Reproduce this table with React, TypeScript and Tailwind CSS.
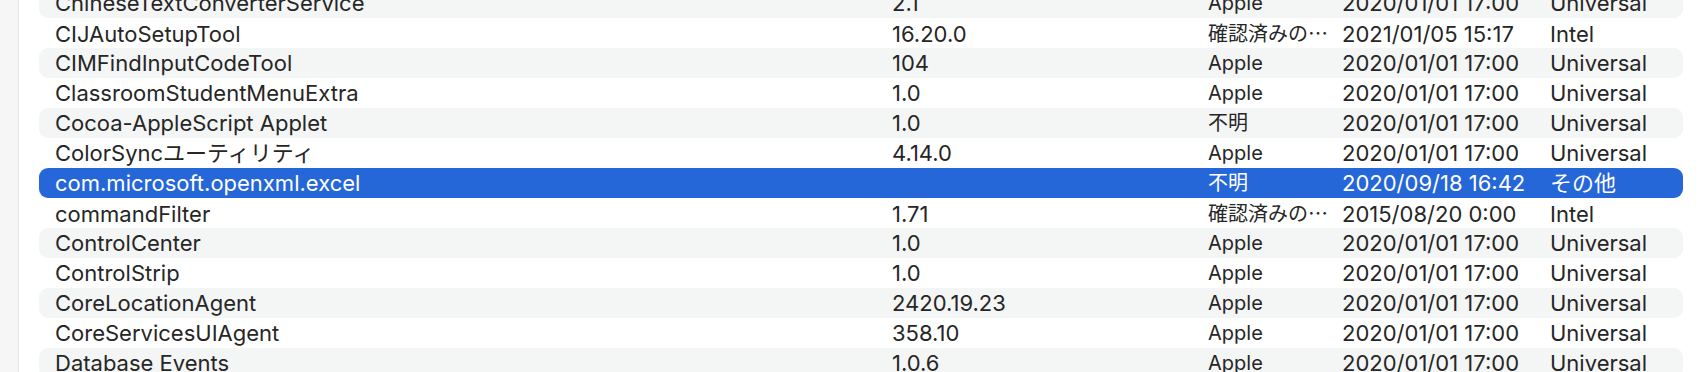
type Row = { name: string; version: string; signer: string; date: string; kind: string };

const rows: Row[] = [
  { name: "ChineseTextConverterService", version: "2.1", signer: "Apple", date: "2020/01/01 17:00", kind: "Universal" },
  { name: "CIJAutoSetupTool", version: "16.20.0", signer: "確認済みの…", date: "2021/01/05 15:17", kind: "Intel" },
  { name: "CIMFindInputCodeTool", version: "104", signer: "Apple", date: "2020/01/01 17:00", kind: "Universal" },
  { name: "ClassroomStudentMenuExtra", version: "1.0", signer: "Apple", date: "2020/01/01 17:00", kind: "Universal" },
  { name: "Cocoa-AppleScript Applet", version: "1.0", signer: "不明", date: "2020/01/01 17:00", kind: "Universal" },
  { name: "ColorSyncユーティリティ", version: "4.14.0", signer: "Apple", date: "2020/01/01 17:00", kind: "Universal" },
  { name: "com.microsoft.openxml.excel", version: "", signer: "不明", date: "2020/09/18 16:42", kind: "その他" },
  { name: "commandFilter", version: "1.71", signer: "確認済みの…", date: "2015/08/20 0:00", kind: "Intel" },
  { name: "ControlCenter", version: "1.0", signer: "Apple", date: "2020/01/01 17:00", kind: "Universal" },
  { name: "ControlStrip", version: "1.0", signer: "Apple", date: "2020/01/01 17:00", kind: "Universal" },
  { name: "CoreLocationAgent", version: "2420.19.23", signer: "Apple", date: "2020/01/01 17:00", kind: "Universal" },
  { name: "CoreServicesUIAgent", version: "358.10", signer: "Apple", date: "2020/01/01 17:00", kind: "Universal" },
  { name: "Database Events", version: "1.0.6", signer: "Apple", date: "2020/01/01 17:00", kind: "Universal" },
];

const SELECTED = 6;

export default function App() {
  return (
    <div
      className="flex h-[372px] w-[1702px] overflow-hidden bg-white text-[22px] text-[#262626]"
      style={{ fontFamily: 'Inter, "Noto Sans CJK JP", sans-serif' }}
    >
      <div className="w-[19px] shrink-0 border-r border-[#e4e4e4] bg-[#f6f6f6]" />
      <div className="-mt-[12px] flex-1 pl-[20px] pr-[19px]">
        {rows.map((r, i) => {
          const sel = i === SELECTED;
          const bg = sel ? "bg-[#2566d8] text-white" : i % 2 === 0 ? "bg-[#f4f5f5]" : "";
          return (
            <div
              key={r.name}
              className={`grid h-[30px] grid-cols-[837px_316px_134px_208px_1fr] items-center rounded-[9px] pl-[16px] leading-[30px] ${bg}`}
            >
              <span className="truncate">{r.name}</span>
              <span>{r.version}</span>
              <span className="whitespace-nowrap text-[20px]">
                {r.signer.endsWith("…") ? (
                  <>
                    {r.signer.slice(0, -1)}
                    <span className="font-['Noto_Sans_CJK_JP']">…</span>
                  </>
                ) : (
                  r.signer
                )}
              </span>
              <span className="whitespace-nowrap">{r.date}</span>
              <span>{r.kind}</span>
            </div>
          );
        })}
      </div>
    </div>
  );
}
